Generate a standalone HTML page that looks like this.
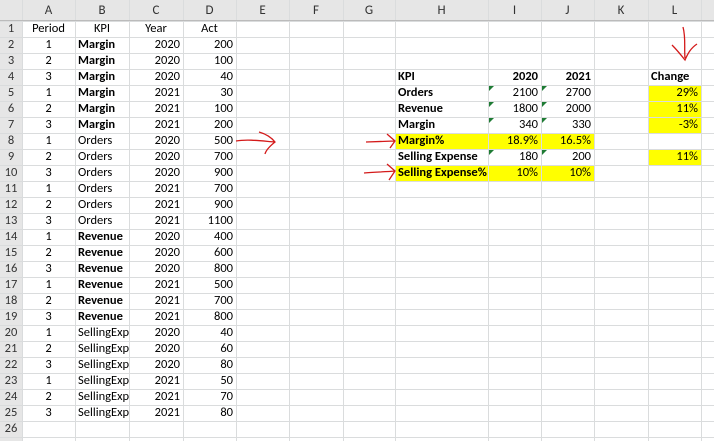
<!DOCTYPE html>
<html><head><style>
body{margin:0;width:714px;height:441px;overflow:hidden;background:#fff;font-family:Calibri,"Liberation Sans",sans-serif;font-size:12.5px;color:#000;position:relative}
.c{position:absolute;height:16px;line-height:16px;white-space:nowrap;overflow:hidden;box-sizing:border-box;padding:0 3px}
.vl{position:absolute;top:0;width:1px;height:441px;background:#dadcdd}
.hl{position:absolute;left:0;height:1px;width:714px;background:#dadcdd}
.hd{position:absolute;background:#e6e6e6;color:#444;text-align:center}
.y{background:#ffff00}
.b{font-weight:bold}
.r{text-align:right}
.ctr{text-align:center}
.t{position:absolute;width:0;height:0;border-top:5px solid #1e7b34;border-right:5px solid transparent}
</style></head><body>
<div class="hd" style="left:0;top:0;width:714px;height:21px"></div>
<div class="hd" style="left:0;top:0;width:22px;height:441px"></div>
<div id="g"></div>
<svg style="position:absolute;left:0;top:0" width="714" height="441">
<g stroke="#d41a1a" stroke-width="1.3" fill="none">
<path d="M236 141 C248 139 262 141 275 142 M259 132 C266 134 271 137 275 142 C270 146 266 150 265 154"/>
<path d="M366 142 L394 141 M387 134 L395 141 L390 148"/>
<path d="M364 173 C374 172 384 172 395 171 M387 164 L395 171 L389 180"/>
<path d="M683 27 C686 38 684 48 685 58 M672 45 C677 50 681 55 685 60 C688 53 691 48 697 44"/>
</g></svg>
<script>
const cols=[[22,75,'A'],[75,129,'B'],[129,183,'C'],[183,236,'D'],[236,289,'E'],[289,343,'F'],[343,395,'G'],[395,488,'H'],[488,541,'I'],[541,594,'J'],[594,648,'K'],[648,701,'L'],[701,760,'']];
let h='';
const rt=r=>21+(r-1)*16;
[[395,594,8],[395,594,10],[648,701,5],[648,701,6],[648,701,7],[648,701,9]].forEach(([a,b,r])=>h+=`<div class="c y" style="left:${a}px;top:${rt(r)}px;width:${b-a}px"></div>`);
cols.forEach(([a,b,n])=>{h+=`<div class="vl" style="left:${a}px"></div>`;h+=`<div class="c ctr" style="left:${a}px;top:3px;width:${b-a}px;color:#333;font-size:13px">${n}</div>`});
for(let r=1;r<=27;r++){h+=`<div class="hl" style="top:${rt(r)}px"></div>`;if(r<=26)h+=`<div class="c ctr" style="left:0;top:${rt(r)}px;width:22px;color:#333;padding:0">${r}</div>`}
h+=`<div style="position:absolute;left:0;top:20px;width:714px;height:1px;background:#bbb"></div>`;
const data=[["Period","KPI","Year","Act"],[1,"*Margin",2020,200],[2,"*Margin",2020,100],[3,"*Margin",2020,40],[1,"*Margin",2021,30],[2,"*Margin",2021,100],[3,"*Margin",2021,200],[1,"Orders",2020,500],[2,"Orders",2020,700],[3,"Orders",2020,900],[1,"Orders",2021,700],[2,"Orders",2021,900],[3,"Orders",2021,1100],[1,"*Revenue",2020,400],[2,"*Revenue",2020,600],[3,"*Revenue",2020,800],[1,"*Revenue",2021,500],[2,"*Revenue",2021,700],[3,"*Revenue",2021,800],[1,"SellingExpense",2020,40],[2,"SellingExpense",2020,60],[3,"SellingExpense",2020,80],[1,"SellingExpense",2021,50],[2,"SellingExpense",2021,70],[3,"SellingExpense",2021,80]];
data.forEach((d,i)=>{const t=rt(i+1),hd=i==0;
h+=`<div class="c ctr" style="left:22px;top:${t}px;width:53px">${d[0]}</div>`;
let k=String(d[1]),bo=k[0]=='*';if(bo)k=k.slice(1);
h+=`<div class="c ${hd?'ctr':''} ${bo?'b':''}" style="left:75px;top:${t}px;width:54px">${k}</div>`;
h+=`<div class="c ${hd?'ctr':'r'}" style="left:129px;top:${t}px;width:54px">${d[2]}</div>`;
h+=`<div class="c ${hd?'ctr':'r'}" style="left:183px;top:${t}px;width:53px">${d[3]}</div>`;});
const T=[[4,"KPI","2020","2021","Change"],[5,"Orders","2100","2700","29%"],[6,"Revenue","1800","2000","11%"],[7,"Margin","340","330","-3%"],[8,"Margin%","18.9%","16.5%",""],[9,"Selling Expense","180","200","11%"],[10,"Selling Expense%","10%","10%",""]];
T.forEach(([r,a,b,c,d])=>{const t=rt(r);
h+=`<div class="c b" style="left:395px;top:${t}px;width:93px">${a}</div>`;
h+=`<div class="c r ${r==4?'b':''}" style="left:488px;top:${t}px;width:53px">${b}</div>`;
h+=`<div class="c r ${r==4?'b':''}" style="left:541px;top:${t}px;width:53px">${c}</div>`;
h+=`<div class="c ${r==4?'b':'r'}" style="left:648px;top:${t}px;width:53px">${d}</div>`;
if([5,6,7,9].includes(r)){h+=`<div class="t" style="left:489px;top:${t+1}px"></div><div class="t" style="left:542px;top:${t+1}px"></div>`}});
document.getElementById('g').outerHTML=h;
</script>
</body></html>
